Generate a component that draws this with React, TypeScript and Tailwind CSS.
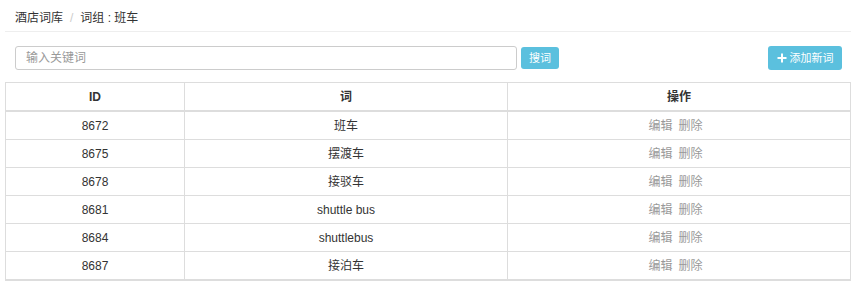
const rows = [
  { id: 8672, word: "班车" },
  { id: 8675, word: "摆渡车" },
  { id: 8678, word: "接驳车" },
  { id: 8681, word: "shuttle bus" },
  { id: 8684, word: "shuttlebus" },
  { id: 8687, word: "接泊车" },
]

const App = () => {
  return (
    <div
      className="w-[866px] h-[281px] overflow-hidden bg-white text-[#333] text-[12px]"
      style={{ fontFamily: '"Liberation Sans", "Noto Sans CJK SC", sans-serif' }}
    >
      <div className="ml-[5px] w-[846px]">
        <div className="h-[32px] border-b border-[#eee] flex items-center pl-[10px] pt-[4px]">
          <span>酒店词库</span>
          <span className="px-[7px] text-[#ccc]">/</span>
          <span>词组 : 班车</span>
        </div>
        <div className="flex items-start h-[50px] pt-[14px] pl-[10px] pr-[9px]">
          <input
            className="w-[502px] h-[24px] border border-[#ccc] rounded-[3px] px-[10px] text-[12px] outline-none placeholder:text-[#999]"
            placeholder="输入关键词"
          />
          <button className="ml-[4px] mt-[1px] w-[38px] h-[22px] rounded-[3px] bg-[#5bc0de] text-white text-[11px]">
            搜词
          </button>
          <div className="flex-1" />
          <button className="w-[74px] h-[24px] rounded-[3px] bg-[#5bc0de] text-white text-[11px] flex items-center justify-center gap-[3px]">
            <svg width="10" height="10" viewBox="0 0 10 10">
              <path d="M5 0.5v9M0.5 5h9" stroke="white" strokeWidth="2" />
            </svg>
            添加新词
          </button>
        </div>
        <div className="border border-[#ddd]">
          <div className="grid grid-cols-[179px_323px_1fr] h-[29px] border-b-2 border-[#ddd] font-bold">
            <div className="flex items-center justify-center border-r border-[#ddd]">ID</div>
            <div className="flex items-center justify-center border-r border-[#ddd]">词</div>
            <div className="flex items-center justify-center">操作</div>
          </div>
          {rows.map((r) => (
            <div key={r.id} className="grid grid-cols-[179px_323px_1fr] h-[28px] border-b border-[#ddd]">
              <div className="flex items-center justify-center border-r border-[#ddd]">{r.id}</div>
              <div className="flex items-center justify-center border-r border-[#ddd]">{r.word}</div>
              <div className="flex items-center justify-center gap-[6px] pr-[7px] text-[#999]">
                <span>编辑</span>
                <span>删除</span>
              </div>
            </div>
          ))}
        </div>
      </div>
    </div>
  )
}

export default App
